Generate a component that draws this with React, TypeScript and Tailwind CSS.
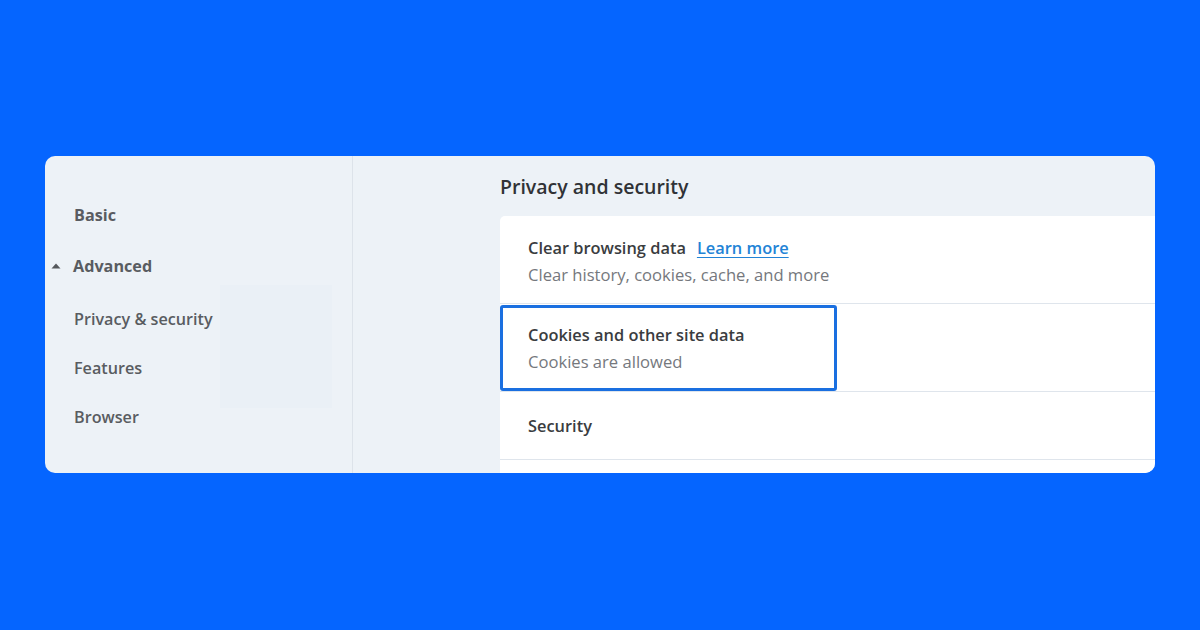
const sideLinks = ['Privacy & security', 'Features', 'Browser']

function SettingRow(props: { title: string; sub?: string; link?: string; focused?: boolean; height: string; last?: boolean }) {
	const { title, sub, link, focused, height, last } = props

	return (
		<div className={`relative flex flex-col justify-center px-7 ${height} ${last ? '' : 'border-b border-[#dfe5ec]'}`}>
			{focused &&
				<div className="absolute left-0 top-[1px] h-[86px] w-[337px] rounded-[3px] border-[3px] border-[#1a6fe0]"></div>
			}
			<div className="flex items-center gap-[11px] text-[16.4px] font-semibold leading-[22px] text-[#3a3c40]">
				<span>{title}</span>
				{link && <span className="text-[#2283d6] underline underline-offset-[3px]">{link}</span>}
			</div>
			{sub && <div className="mt-[5px] text-[16.6px] leading-[22px] text-[#75787d]">{sub}</div>}
		</div>
	)
}

export default function App() {
	return (
		<div className="h-[630px] w-[1200px] bg-[#0565ff] pt-[156px] pl-[45px]" style={{ fontFamily: '"Open Sans", "Noto Sans", sans-serif' }}>
			<div className="flex h-[317px] w-[1110px] overflow-hidden rounded-[10px] bg-[#edf2f7]">
				<aside className="flex w-[308px] shrink-0 flex-col border-r border-[#dde3ea] pt-[44px] text-[16.2px] text-[#595c61]">
					<div className="relative">
						<div className="pointer-events-none absolute left-[175px] top-[85px] h-[123px] w-[112px] bg-[#eaf0f6]"></div>
					</div>
					<div className="relative pl-[29px] font-bold leading-[30px]">Basic</div>
					<div className="relative mt-[21px] flex items-center pl-[5px] font-bold leading-[30px]">
						<svg width="12" height="8" viewBox="0 0 12 8" className="mr-[11px]"><path d="M1.5 6.5 L6 1.5 L10.5 6.5 Z" fill="#55585c" /></svg>
						Advanced
					</div>
					{sideLinks.map((label, index) => {
						return (
							<div key={index} className={`relative pl-[29px] leading-[30px] font-semibold ${index === 0 ? 'mt-[23px]' : 'mt-[19px]'}`}>{label}</div>
						)
					})}
				</aside>
				<main className="flex min-w-0 flex-1 flex-col pl-[147px]">
					<div className="flex h-[60px] shrink-0 items-center pt-[1px] text-[19.5px] font-semibold text-[#303236]">Privacy and security</div>
					<div className="flex-1 rounded-tl-[5px] bg-white">
						<SettingRow title="Clear browsing data" link="Learn more" sub="Clear history, cookies, cache, and more" height="h-[88px] pt-[3px]" />
						<SettingRow title="Cookies and other site data" sub="Cookies are allowed" focused height="h-[88px] pt-[1px]" />
						<SettingRow title="Security" height="h-[68px] pt-[1px]" />
						<div className="h-[20px]"></div>
					</div>
				</main>
			</div>
		</div>
	)
}
